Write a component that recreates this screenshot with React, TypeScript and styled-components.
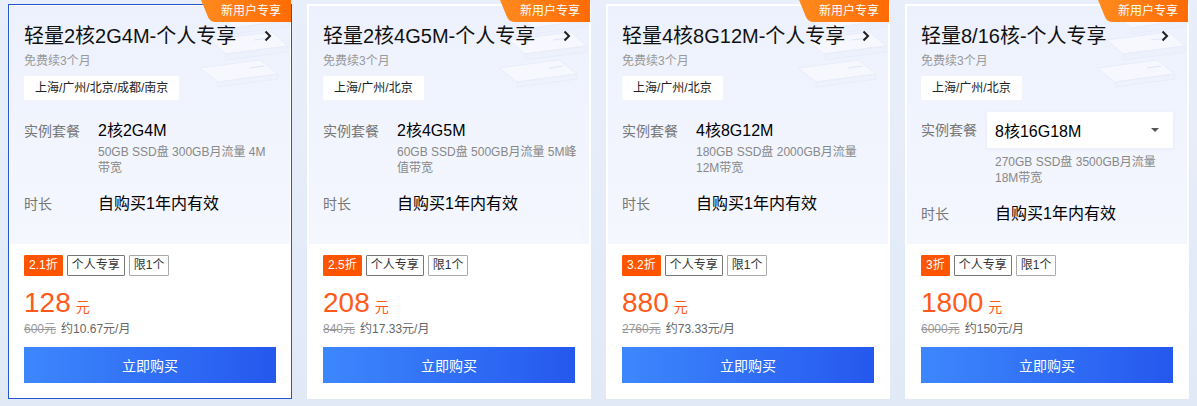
import React from 'react'
import styled, {createGlobalStyle} from 'styled-components'

interface Plan {
  title: string
  regions: string
  plan: string
  spec: string[]
  discount: string
  price: string
  orig: string
  monthly: string
  active?: boolean
  select?: boolean
}

const plans: Plan[] = [
  {
    title: '轻量2核2G4M-个人专享',
    regions: '上海/广州/北京/成都/南京',
    plan: '2核2G4M',
    spec: ['50GB SSD盘 300GB月流量 4M', '带宽'],
    discount: '2.1折',
    price: '128',
    orig: '600元',
    monthly: '约10.67元/月',
    active: true,
  },
  {
    title: '轻量2核4G5M-个人专享',
    regions: '上海/广州/北京',
    plan: '2核4G5M',
    spec: ['60GB SSD盘 500GB月流量 5M峰', '值带宽'],
    discount: '2.5折',
    price: '208',
    orig: '840元',
    monthly: '约17.33元/月',
  },
  {
    title: '轻量4核8G12M-个人专享',
    regions: '上海/广州/北京',
    plan: '4核8G12M',
    spec: ['180GB SSD盘 2000GB月流量', '12M带宽'],
    discount: '3.2折',
    price: '880',
    orig: '2760元',
    monthly: '约73.33元/月',
  },
  {
    title: '轻量8/16核-个人专享',
    regions: '上海/广州/北京',
    plan: '8核16G18M',
    spec: ['270GB SSD盘 3500GB月流量', '18M带宽'],
    discount: '3折',
    price: '1800',
    orig: '6000元',
    monthly: '约150元/月',
    select: true,
  },
]

function Decoration() {
  return (
    <DecoSvg width="110" height="100" viewBox="0 0 110 100">
      <g fill="#ffffff" fillOpacity="0.45" stroke="#e8edfa" strokeWidth="1">
        <path d="M40 10 L96 2 L110 14 L54 22 Z" />
        <path d="M54 22 L110 14 L110 20 L54 28 Z" fill="#eaeffb" />
        <path d="M30 34 L92 26 L108 40 L46 48 Z" />
        <path d="M46 48 L108 40 L108 46 L46 54 Z" fill="#ecf0fb" />
        <path d="M20 62 L80 54 L98 68 L38 76 Z" />
        <path d="M38 76 L98 68 L98 73 L38 81 Z" fill="#edf1fb" />
      </g>
      <g stroke="#dfe6f7" strokeWidth="1.2">
        <line x1="74" y1="34" x2="90" y2="32" />
        <line x1="70" y1="62" x2="84" y2="60" />
      </g>
    </DecoSvg>
  )
}

function Chevron() {
  return (
    <svg width="8" height="12" viewBox="0 0 8 12">
      <polyline points="1.5,1.5 6,6 1.5,10.5" fill="none" stroke="#1f1f1f" strokeWidth="2" />
    </svg>
  )
}

function PlanCard({plan}: {plan: Plan}) {
  return (
    <Card $active={plan.active}>
      <Badge>新用户专享</Badge>
      <Top>
        <Decoration />
        <TitleRow>
          <Title>{plan.title}</Title>
          <Chevron />
        </TitleRow>
        <Sub>免费续3个月</Sub>
        <Region>{plan.regions}</Region>
        <Row $select={plan.select}>
          <Label $select={plan.select}>实例套餐</Label>
          <div>
            {plan.select ? (
              <Select>
                <span>{plan.plan}</span>
                <Caret />
              </Select>
            ) : (
              <Value>{plan.plan}</Value>
            )}
            <Spec $select={plan.select}>
              {plan.spec.map((line) => (
                <div key={line}>{line}</div>
              ))}
            </Spec>
          </div>
        </Row>
        <Row $gap>
          <Label>时长</Label>
          <Value>自购买1年内有效</Value>
        </Row>
      </Top>
      <Bottom>
        <Tags>
          <Tag $kind="discount">{plan.discount}</Tag>
          <Tag $kind="dark">个人专享</Tag>
          <Tag $kind="light">限1个</Tag>
        </Tags>
        <PriceLine>
          <Price>{plan.price}</Price>
          <Unit>元</Unit>
        </PriceLine>
        <OrigLine>
          <Strike>{plan.orig}</Strike>
          <span>{plan.monthly}</span>
        </OrigLine>
        <BuyButton>立即购买</BuyButton>
      </Bottom>
    </Card>
  )
}

export default function App() {
  return (
    <>
      <GlobalStyle />
      <Page>
        {plans.map((p) => (
          <PlanCard key={p.title} plan={p} />
        ))}
      </Page>
    </>
  )
}

const GlobalStyle = createGlobalStyle`
  html, body {
    margin: 0;
    padding: 0;
    background: #e4ebf8;
  }
  body {
    font-family: "Liberation Sans", "Noto Sans CJK SC", sans-serif;
    color: #000;
  }
`

const Page = styled.div`
  display: grid;
  grid-template-columns: repeat(4, 284px);
  gap: 15px;
  padding: 4px 8px 7px;
  width: 1197px;
  height: 406px;
  box-sizing: border-box;
  background: linear-gradient(180deg, #e9effa 0%, #e1e9f7 100%);
`

const Card = styled.div<{$active?: boolean}>`
  position: relative;
  display: flex;
  flex-direction: column;
  border: 1px solid ${(p) => (p.$active ? '#2357d0' : '#ffffff')};
  background: #fff;
`

const Badge = styled.div`
  position: absolute;
  top: -5px;
  right: 0;
  width: 90px;
  height: 22px;
  box-sizing: border-box;
  padding-left: 20px;
  font-size: 12px;
  line-height: 22px;
  color: #fff;
  background: linear-gradient(90deg, #ff8a1e 0%, #ff6b05 100%);
  clip-path: path('M0 0 L90 0 L90 22 L15 22 Q9 22 7 17 Z');
  z-index: 3;
`

const Top = styled.div`
  position: relative;
  height: 238px;
  margin: 1px 1px 0;
  padding: 18px 14px 0;
  box-sizing: border-box;
  background: linear-gradient(180deg, #edf1fd 0%, #f2f5fe 60%, #f4f7fe 100%);
  overflow: hidden;
`

const DecoSvg = styled.svg`
  position: absolute;
  top: 0;
  right: 0;
`

const TitleRow = styled.div`
  position: relative;
  display: flex;
  align-items: center;
  justify-content: space-between;
  padding-right: 4px;
`

const Title = styled.div`
  font-size: 20px;
  line-height: 24px;
  color: #111;
`

const Sub = styled.div`
  position: relative;
  margin-top: 4px;
  font-size: 12px;
  line-height: 18px;
  color: #999;
`

const Region = styled.div`
  position: relative;
  display: inline-block;
  margin-top: 6px;
  padding: 0 11px;
  height: 24px;
  font-size: 12px;
  line-height: 24px;
  color: #222;
  background: #fff;
  border-radius: 2px;
`

const Row = styled.div<{$select?: boolean; $gap?: boolean}>`
  position: relative;
  display: grid;
  grid-template-columns: 74px 1fr;
  margin-top: ${(p) => (p.$gap ? '17px' : p.$select ? '12px' : '20px')};
`

const Label = styled.div<{$select?: boolean}>`
  font-size: 14px;
  line-height: ${(p) => (p.$select ? '36px' : '22px')};
  color: #777;
`

const Value = styled.div`
  font-size: 16px;
  line-height: 22px;
  color: #000;
`

const Select = styled.div`
  display: flex;
  align-items: center;
  justify-content: space-between;
  margin-left: -8px;
  height: 36px;
  padding: 0 14px 0 8px;
  font-size: 16px;
  background: #fff;
  box-shadow: 0 1px 4px rgba(180, 195, 225, 0.2);
`

const Caret = styled.span`
  width: 0;
  height: 0;
  border-left: 4px solid transparent;
  border-right: 4px solid transparent;
  border-top: 4px solid #555;
`

const Spec = styled.div<{$select?: boolean}>`
  margin-top: ${(p) => (p.$select ? '6px' : '2px')};
  font-size: 12px;
  line-height: 16px;
  color: #888;
  white-space: nowrap;
`

const Bottom = styled.div`
  flex: 1;
  display: flex;
  flex-direction: column;
  padding: 11px 15px 14px;
`

const Tags = styled.div`
  display: flex;
  gap: 4px;
`

const tagColors = {
  discount: {bg: '#ff5400', border: '#ff5400', color: '#fff'},
  dark: {bg: '#fff', border: '#777', color: '#333'},
  light: {bg: '#fff', border: '#aaa', color: '#333'},
}

const Tag = styled.span<{$kind: keyof typeof tagColors}>`
  height: 21px;
  box-sizing: border-box;
  padding: 0 4px;
  font-size: 12px;
  line-height: 19px;
  border: 1px solid ${(p) => tagColors[p.$kind].border};
  background: ${(p) => tagColors[p.$kind].bg};
  color: ${(p) => tagColors[p.$kind].color};
  border-radius: 1px;
`

const PriceLine = styled.div`
  display: flex;
  align-items: baseline;
  margin-top: 11px;
  height: 32px;
  color: #ff5a1a;
`

const Price = styled.span`
  font-size: 28px;
  line-height: 32px;
`

const Unit = styled.span`
  margin-left: 5px;
  font-size: 14px;
`

const OrigLine = styled.div`
  display: flex;
  gap: 5px;
  margin-top: 1px;
  font-size: 12px;
  line-height: 18px;
  color: #666;
`

const Strike = styled.span`
  color: #999;
  text-decoration: line-through;
`

const BuyButton = styled.button`
  margin-top: 9px;
  height: 36px;
  border: none;
  font-family: inherit;
  font-size: 14px;
  color: #fff;
  background: linear-gradient(90deg, #3d87fd 0%, #2558ee 100%);
  cursor: pointer;
`
